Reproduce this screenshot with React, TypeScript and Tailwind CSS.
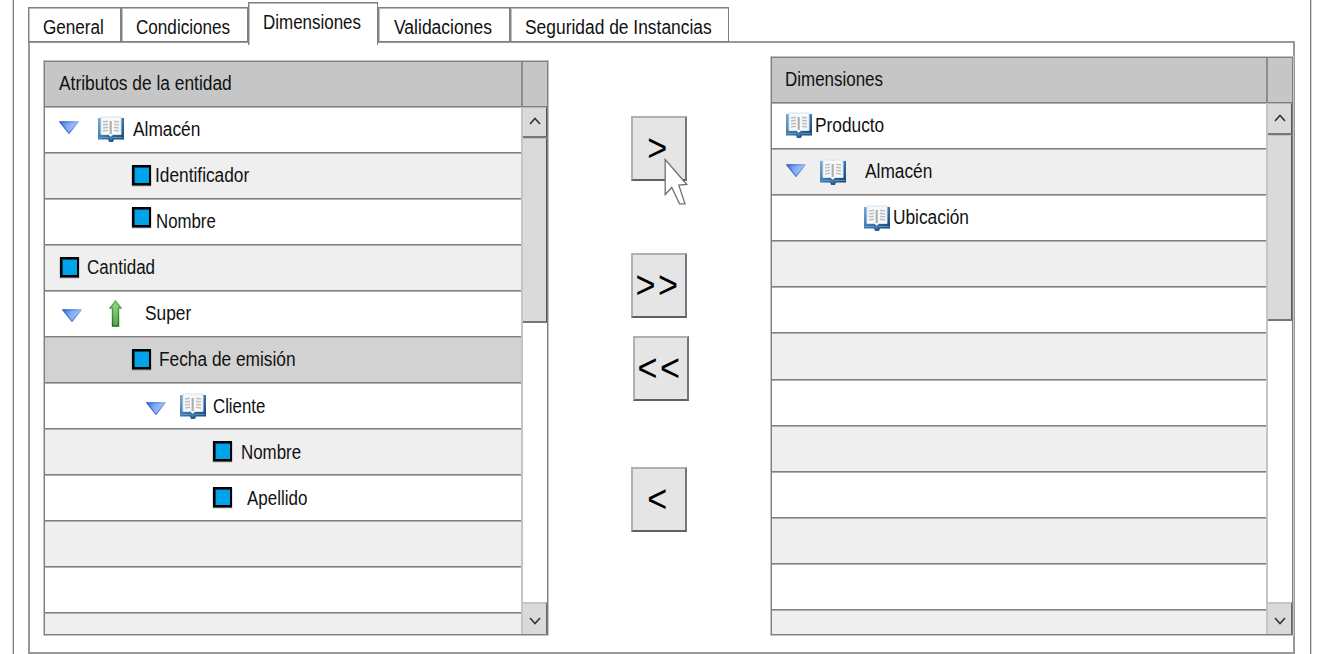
import type { ReactNode } from 'react';

function Label({ text, className = '', scale = 'scale-x-[0.865]' }: { text: string; className?: string; scale?: string }) {
  return (
    <span className={`inline-block origin-left whitespace-nowrap text-[20px] leading-[22px] text-[#111] ${scale} ${className}`}>
      {text}
    </span>
  );
}

function Book({ className = '' }: { className?: string }) {
  return (
    <svg viewBox="0 0 26 26" className={`h-[26px] w-[26px] shrink-0 ${className}`}>
      <defs>
        <linearGradient id="cover" x1="0" y1="0" x2="1" y2="1">
          <stop offset="0" stopColor="#74abd8" />
          <stop offset="0.5" stopColor="#3a76ad" />
          <stop offset="1" stopColor="#123f70" />
        </linearGradient>
      </defs>
      <path d="M0 2H26V23.5H16L15 26H11L10 23.5H0Z" fill="url(#cover)" />
      <path d="M3 1H12L12.7 2L13.5 1H23V18.5H15L12.7 20.5L10.5 18.5H3Z" fill="#f8f9fa" stroke="#d3e2ee" strokeWidth="1" />
      <path d="M1 21.5H10.5L12.7 23L15 21.5H25" fill="none" stroke="#6d9dc6" strokeWidth="0.8" />
      <path d="M12.7 5V18" stroke="#b0b0b0" strokeWidth="2.2" />
      <path d="M5 6L10 5.2M5 9L10 8.2M5 12L10 11.2M5 15L10 14.2M16 5.2L21 6M16 8.2L21 9M16 11.2L21 12M16 14.2L21 15" stroke="#bdbdbd" strokeWidth="1.5" />
    </svg>
  );
}

function Toggle({ className = '' }: { className?: string }) {
  return (
    <svg viewBox="0 0 20 13" className={`h-[13px] w-[20px] shrink-0 ${className}`}>
      <defs>
        <linearGradient id="toggle" x1="0" y1="0" x2="1" y2="0.3">
          <stop offset="0" stopColor="#3f75dc" />
          <stop offset="0.5" stopColor="#84aaf2" />
          <stop offset="1" stopColor="#a9c5fa" />
        </linearGradient>
        <linearGradient id="toggleEdge" x1="0" y1="0" x2="1" y2="0">
          <stop offset="0" stopColor="#2459c8" />
          <stop offset="0.6" stopColor="#5484e0" />
          <stop offset="1" stopColor="#8fb2f4" />
        </linearGradient>
      </defs>
      <path d="M.8 .8H19.2L10 12.4Z" fill="url(#toggle)" stroke="url(#toggleEdge)" strokeWidth="1.2" />
    </svg>
  );
}

function UpArrow({ className = '' }: { className?: string }) {
  return (
    <svg viewBox="0 0 13 27" className={`h-[27px] w-[13px] shrink-0 ${className}`}>
      <defs>
        <linearGradient id="up" x1="0" y1="0" x2="0" y2="1">
          <stop offset="0" stopColor="#9ad890" />
          <stop offset="1" stopColor="#5ba552" />
        </linearGradient>
        <linearGradient id="upEdge" x1="0" y1="0" x2="0" y2="1">
          <stop offset="0" stopColor="#62b558" />
          <stop offset="1" stopColor="#226b1f" />
        </linearGradient>
      </defs>
      <path d="M6.5 1L12 8H9.5V26H3.5V8H1Z" fill="url(#up)" stroke="url(#upEdge)" strokeWidth="1.4" />
    </svg>
  );
}

function Square({ className = '' }: { className?: string }) {
  return <span className={`h-[20px] w-[19px] shrink-0 border-2 border-black bg-[#00a2e8] shadow-[0_1px_1px_#555,inset_1px_1px_0_#00486a] ${className}`} />;
}

function Chevron({ up = false }: { up?: boolean }) {
  return (
    <svg viewBox="0 0 12 8" className={`h-[8px] w-[12px] ${up ? 'mb-[2px]' : 'mt-[3px]'}`}>
      <path d={up ? 'M1 7L6 1.5L11 7' : 'M1 1L6 6.5L11 1'} fill="none" stroke="#333" strokeWidth="1.6" />
    </svg>
  );
}

function Row({ children, className = 'h-[46px]' }: { children?: ReactNode; className?: string }) {
  return (
    <div className={`flex shrink-0 items-start border-b border-[#808080] shadow-[inset_0_1px_0_#b0b0b0] ${className}`}>{children}</div>
  );
}

function ScrollBar({ thumb, top }: { thumb: string; top: string }) {
  return (
    <div className="flex w-[26px] shrink-0 flex-col border-l-2 border-[#c4c4c4] bg-white">
      <div className={`flex shrink-0 items-center justify-center border-b-2 border-b-[#777] border-r border-r-[#555] border-t border-t-[#b5b5b5] bg-[#dadada] ${top}`}>
        <Chevron up />
      </div>
      <div className={`shrink-0 border-b-2 border-b-[#777] border-r border-r-[#555] border-t border-t-[#c0c0c0] bg-[#dadada] ${thumb}`} />
      <div className="grow" />
      <div className="flex h-[32px] shrink-0 items-center justify-center border-r border-t-2 border-r-[#666] border-t-[#c4c4c4] bg-[#dadada]">
        <Chevron />
      </div>
    </div>
  );
}

function Table({ title, header, className, children, thumb, top }: { title: string; header: string; className: string; children: ReactNode; thumb: string; top: string }) {
  return (
    <section className={`flex shrink-0 flex-col border border-[#808080] shadow-[0_0_0_1px_#c4c4c4] ${className}`}>
      <header className={`flex shrink-0 border-b border-[#808080] bg-[#c6c6c6] ${header}`}>
        <div className={`grow border-r-2 border-[#8c8c8c] pt-[10px] ${title === 'Dimensiones' ? 'pl-[13px]' : 'pl-[14px]'}`}>
          <Label text={title} scale={title === 'Dimensiones' ? 'scale-x-[0.848]' : 'scale-x-[0.868]'} />
        </div>
        <div className="w-[24px]" />
      </header>
      <div className="flex min-h-0 grow">
        <div className="flex min-w-0 grow flex-col overflow-hidden">{children}</div>
        <ScrollBar thumb={thumb} top={top} />
      </div>
    </section>
  );
}

function MoveButton({ text, className = '' }: { text: string; className?: string }) {
  return (
    <button className={`flex h-[65px] w-[56px] shrink-0 items-center justify-center border-2 border-b-[#606060] border-l-[#b0b0b0] border-r-[#757575] border-t-[#b0b0b0] bg-[#e5e5e5] pb-[2px] text-[38px] leading-none text-black ${className}`}>
      <span className="-ml-[2px] inline-block scale-x-[0.9] tracking-[2.8px]">{text}</span>
    </button>
  );
}

function Tab({ text, className, scale }: { text: string; className: string; scale?: string }) {
  return (
    <div className={`shrink-0 border border-[#808080] bg-white shadow-[inset_0_1px_0_#b8b8b8,inset_1px_0_0_#c4c4c4] ${className}`}>
      <Label text={text} scale={scale} />
    </div>
  );
}

export default function App() {
  return (
    <main className="relative h-[654px] w-[1317px] overflow-hidden bg-white pl-[13px] font-['Liberation_Sans',Arial,sans-serif]">
      <div className="h-full w-[1298px] border-x border-[#808080] pl-[14px] pt-[2px] shadow-[0_0_0_1px_#d4d4d4]">
        <nav className="relative flex h-[39px] items-start">
          <Tab text="General" scale="scale-x-[0.855]" className="mt-[5px] h-[35px] w-[93px] pl-[14px] pt-[8px]" />
          <Tab text="Condiciones" scale="scale-x-[0.855]" className="mt-[5px] h-[35px] w-[127px] pl-[14px] pt-[8px]" />
          <Tab text="Dimensiones" scale="scale-x-[0.848]" className="relative z-10 h-[43px] w-[130px] border-b-0 pl-[14px] pt-[8px]" />
          <Tab text="Validaciones" scale="scale-x-[0.875]" className="mt-[5px] h-[35px] w-[132px] pl-[15px] pt-[8px]" />
          <Tab text="Seguridad de Instancias" scale="scale-x-[0.87]" className="mt-[5px] h-[35px] w-[219px] pl-[14px] pt-[8px]" />
        </nav>
        <div className="flex h-[613px] w-[1267px] items-start border-2 border-[#999] pl-[14px]">
          <Table title="Atributos de la entidad" header="h-[45px]" className="mt-[18px] h-[574px] w-[504px]" top="h-[31px]" thumb="h-[185px]">
            <Row><Toggle className="ml-[14px] mt-[14px]" /><Book className="ml-[19px] mt-[9px]" /><Label text="Almacén" className="ml-[9px] mt-[11px]" /></Row>
            <Row className="h-[46px] bg-[#efefef]"><Square className="ml-[87px] mt-[12px]" /><Label text="Identificador" className="ml-[4px] mt-[11px]" /></Row>
            <Row><Square className="ml-[87px] mt-[8px]" /><Label text="Nombre" scale="scale-x-[0.84]" className="ml-[5px] mt-[11px]" /></Row>
            <Row className="h-[46px] bg-[#efefef]"><Square className="ml-[15px] mt-[12px]" /><Label text="Cantidad" scale="scale-x-[0.85]" className="ml-[8px] mt-[11px]" /></Row>
            <Row><Toggle className="ml-[17px] mt-[18px]" /><UpArrow className="ml-[27px] mt-[9px]" /><Label text="Super" className="ml-[23px] mt-[11px]" /></Row>
            <Row className="h-[46px] bg-[#d2d2d2]"><Square className="ml-[87px] mt-[12px]" /><Label text="Fecha de emisión" className="ml-[8px] mt-[11px]" /></Row>
            <Row><Toggle className="ml-[101px] mt-[19px]" /><Book className="ml-[14px] mt-[10px]" /><Label text="Cliente" scale="scale-x-[0.84]" className="ml-[7px] mt-[12px]" /></Row>
            <Row className="h-[46px] bg-[#efefef]"><Square className="ml-[168px] mt-[12px]" /><Label text="Nombre" scale="scale-x-[0.845]" className="ml-[9px] mt-[12px]" /></Row>
            <Row><Square className="ml-[168px] mt-[12px]" /><Label text="Apellido" scale="scale-x-[0.85]" className="ml-[15px] mt-[12px]" /></Row>
            <Row className="h-[46px] bg-[#efefef]" />
            <Row />
            <Row className="grow border-b-0 bg-[#efefef]" />
          </Table>
          <div className="ml-[83px] flex shrink-0 flex-col pt-[73px]">
            <MoveButton text=">" />
            <MoveButton text=">>" className="mt-[72px]" />
            <MoveButton text="<<" className="ml-[2px] mt-[18px]" />
            <MoveButton text="<" className="mt-[66px]" />
          </div>
          <Table title="Dimensiones" header="h-[45px]" className="ml-[82px] mt-[14px] h-[578px] w-[522px]" top="h-[32px]" thumb="h-[186px]">
            <Row><Book className="ml-[14px] mt-[9px]" /><Label text="Producto" className="ml-[3px] mt-[11px]" /></Row>
            <Row className="h-[46px] bg-[#efefef]"><Toggle className="ml-[14px] mt-[15px]" /><Book className="ml-[14px] mt-[10px]" /><Label text="Almacén" className="ml-[19px] mt-[11px]" /></Row>
            <Row><Book className="ml-[92px] mt-[10px]" /><Label text="Ubicación" scale="scale-x-[0.865]" className="ml-[3px] mt-[11px]" /></Row>
            <Row className="h-[46px] bg-[#efefef]" />
            <Row />
            <Row className="h-[47px] bg-[#efefef]" />
            <Row />
            <Row className="h-[46px] bg-[#efefef]" />
            <Row />
            <Row className="h-[46px] bg-[#efefef]" />
            <Row />
            <Row className="grow border-b-0 bg-[#efefef]" />
          </Table>
        </div>
      </div>
      <svg viewBox="664 157 25 49" className="absolute left-[664px] top-[157px] h-[49px] w-[25px]">
        <path d="M665.2 159.5V194.5L671.8 187.5L679.5 203.8H685L678.8 185.2L686.8 184.5Z" fill="white" stroke="#707070" strokeWidth="1.3" />
      </svg>
    </main>
  );
}
